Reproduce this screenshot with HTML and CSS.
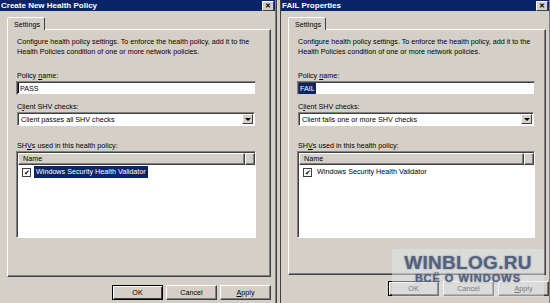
FILE: index.html
```html
<!DOCTYPE html>
<html lang="en">
<head>
    <meta charset="UTF-8">
    <title>Health Policy Dialogs</title>
    <link rel="stylesheet" href="styles.css">
</head>
<body>
<div class="desktop">
    <div class="window win-left">
        <div class="titlebar">
            <span class="title">Create New Health Policy</span>
            <span class="close">&#x2715;</span>
        </div>
        <div class="tabs"><div class="tab">Settings</div></div>
        <div class="panel">
            <p class="desc">Configure health policy settings. To enforce the health policy, add it to the<br>Health Policies condition of one or more network policies.</p>
            <div class="label lbl-name">Policy <u>n</u>ame:</div>
            <div class="textbox"><span class="caret"></span>PASS</div>
            <div class="label lbl-checks">C<u>l</u>ient SHV checks:</div>
            <div class="select">
                <span class="select-text">Client passes all SHV checks</span>
                <span class="drop"><span class="arrow"></span></span>
            </div>
            <div class="label lbl-shv">SH<u>V</u>s used in this health policy:</div>
            <div class="list">
                <div class="list-head">
                    <span class="col-name">Name</span>
                    <span class="col-rest"></span>
                </div>
                <div class="list-row">
                    <span class="check">&#x2714;</span>
                    <span class="item selected">Windows Security Health Validator</span>
                </div>
            </div>
        </div>
        <div class="buttons">
            <div class="btn default">OK</div>
            <div class="btn">Cancel</div>
            <div class="btn"><u>A</u>pply</div>
        </div>
    </div>

    <div class="window win-right">
        <div class="titlebar">
            <span class="title">FAIL Properties</span>
            <span class="close">&#x2715;</span>
        </div>
        <div class="tabs"><div class="tab">Settings</div></div>
        <div class="panel">
            <p class="desc">Configure health policy settings. To enforce the health policy, add it to the<br>Health Policies condition of one or more network policies.</p>
            <div class="label lbl-name">Policy <u>n</u>ame:</div>
            <div class="textbox"><span class="selected">FAIL</span></div>
            <div class="label lbl-checks">C<u>l</u>ient SHV checks:</div>
            <div class="select">
                <span class="select-text">Client fails one or more SHV checks</span>
                <span class="drop"><span class="arrow"></span></span>
            </div>
            <div class="label lbl-shv">SH<u>V</u>s used in this health policy:</div>
            <div class="list">
                <div class="list-head">
                    <span class="col-name">Name</span>
                    <span class="col-rest"></span>
                </div>
                <div class="list-row">
                    <span class="check">&#x2714;</span>
                    <span class="item">Windows Security Health Validator</span>
                </div>
            </div>
        </div>
        <div class="buttons">
            <div class="btn default">OK</div>
            <div class="btn">Cancel</div>
            <div class="btn"><u>A</u>pply</div>
        </div>
    </div>

    <div class="watermark">
        <div class="wm-big">WINBLOG.RU</div>
        <div class="wm-small">ВСЁ О WINDOWS</div>
    </div>
</div>
</body>
</html>
```

FILE: styles.css
```css
* {
    box-sizing: border-box;
}
body {
    margin: 0;
    width: 550px;
    height: 303px;
    overflow: hidden;
    background: #d4d0c8;
    font-family: "Liberation Sans", Arial, sans-serif;
    font-size: 7.2px;
    color: #000;
}
.desktop {
    display: flex;
    gap: 3px;
    height: 303px;
    position: relative;
}
.window {
    background: #d4d0c8;
    display: flex;
    flex-direction: column;
    flex-shrink: 0;
}
.win-left {
    width: 277px;
    border-right: 1px solid #404040;
    box-shadow: inset -1px 0 0 #808080;
}
.win-right {
    width: 270px;
    border-left: 1px solid #404040;
    border-right: 1px solid #808080;
}
.titlebar {
    height: 11px;
    background: #0a246a;
    display: flex;
    align-items: center;
    justify-content: space-between;
    padding-left: 1px;
}
.win-left .titlebar {
    margin-right: 1px;
}
.title {
    color: #fff;
    font-weight: bold;
    font-size: 8px;
    line-height: 11px;
}
.close {
    width: 12px;
    height: 10px;
    margin-right: 1px;
    background: #d4d0c8;
    border-top: 1px solid #fff;
    border-left: 1px solid #fff;
    border-right: 1px solid #404040;
    border-bottom: 1px solid #404040;
    font-size: 7px;
    font-weight: bold;
    line-height: 8px;
    text-align: center;
}
.tabs {
    display: flex;
    margin: 6px 0 0 7px;
}
.tab {
    width: 38px;
    height: 13px;
    padding: 2px 0 0 6px;
    border-top: 1px solid #fff;
    border-left: 1px solid #fff;
    border-right: 1px solid #404040;
    border-radius: 2px 2px 0 0;
    line-height: 10px;
    position: relative;
    z-index: 1;
    margin-bottom: -1px;
    background: #d4d0c8;
}
.panel {
    margin-left: 7px;
    border-top: 1px solid #fff;
    border-left: 1px solid #fff;
    border-right: 1px solid #404040;
    border-bottom: 1px solid #404040;
    box-shadow: inset -1px -1px 0 #808080;
    display: flex;
    flex-direction: column;
}
.win-left .panel {
    width: 264px;
    height: 248px;
    padding: 7px 14px 0 8px;
}
.win-right .panel {
    width: 258px;
    height: 246px;
    padding: 7px 10px 0 8px;
}
.desc {
    margin: 0 0 0 1px;
    line-height: 10px;
}
.label {
    line-height: 10px;
    padding-left: 1px;
}
.lbl-name {
    margin-top: 14px;
}
.lbl-checks {
    margin-top: 7px;
}
.lbl-shv {
    margin-top: 15px;
}
.textbox {
    height: 14px;
    background: #fff;
    border-top: 1px solid #808080;
    border-left: 1px solid #808080;
    border-right: 1px solid #d4d0c8;
    border-bottom: 1px solid #d4d0c8;
    box-shadow: inset 1px 1px 0 #404040;
    padding: 1px 0 0 1px;
    line-height: 11px;
    display: flex;
}
.caret {
    width: 1px;
    height: 10px;
    background: #000;
    margin: 0 1px 0 0;
}
.selected {
    background: #0a246a;
    color: #fff;
}
.textbox .selected {
    padding: 0 1px;
}
.select {
    height: 14px;
    margin: 0 1px;
    background: #fff;
    border-top: 1px solid #808080;
    border-left: 1px solid #808080;
    border-right: 1px solid #fff;
    border-bottom: 1px solid #fff;
    box-shadow: inset 1px 1px 0 #404040;
    display: flex;
    align-items: stretch;
    padding: 1px 1px 1px 3px;
}
.select-text {
    flex: 1;
    line-height: 11px;
}
.drop {
    width: 11px;
    background: #d4d0c8;
    border-top: 1px solid #fff;
    border-left: 1px solid #fff;
    border-right: 1px solid #404040;
    border-bottom: 1px solid #404040;
    display: flex;
    align-items: center;
    justify-content: center;
}
.arrow {
    width: 0;
    height: 0;
    border-left: 3px solid transparent;
    border-right: 3px solid transparent;
    border-top: 3px solid #000;
}
.list {
    height: 87px;
    background: #fff;
    border-top: 1px solid #808080;
    border-left: 1px solid #808080;
    border-right: 1px solid #fff;
    border-bottom: 1px solid #fff;
    box-shadow: inset 1px 1px 0 #404040;
    padding: 1px 0 0 1px;
}
.list-head {
    height: 12px;
    display: flex;
}
.col-name,
.col-rest {
    background: #d4d0c8;
    border-top: 1px solid #fff;
    border-left: 1px solid #fff;
    border-right: 1px solid #404040;
    border-bottom: 1px solid #404040;
    box-shadow: inset -1px -1px 0 #808080;
    line-height: 9px;
    padding-left: 4px;
}
.col-name {
    flex: 1;
}
.col-rest {
    width: 10px;
}
.list-row {
    display: flex;
    align-items: center;
    height: 12px;
    padding-left: 4px;
    margin-top: 1px;
}
.check {
    width: 9px;
    height: 9px;
    border: 1px solid #404040;
    background: #fff;
    font-size: 7px;
    line-height: 7px;
    text-align: center;
    margin-right: 3px;
}
.item {
    padding: 1px 2px;
    line-height: 10px;
}
.buttons {
    display: flex;
    justify-content: flex-end;
}
.win-left .buttons {
    margin-top: 8px;
    gap: 3px;
    padding-right: 5px;
}
.win-right .buttons {
    margin-top: 6px;
    gap: 4px;
    padding-right: 0;
}
.btn {
    width: 51px;
    height: 15px;
    border-top: 1px solid #fff;
    border-left: 1px solid #fff;
    border-right: 1px solid #404040;
    border-bottom: 1px solid #404040;
    box-shadow: inset -1px -1px 0 #808080;
    text-align: center;
    line-height: 13px;
}
.btn.default {
    border: 1px solid #000;
    box-shadow: inset 1px 1px 0 #fff, inset -1px -1px 0 #404040;
}
.watermark {
    position: absolute;
    left: 392px;
    top: 249px;
    width: 152px;
    height: 48px;
    background: rgba(226, 229, 233, 0.5);
    text-align: center;
    font-weight: bold;
    color: #52617e;
    text-shadow: 0 0 2px rgba(60, 70, 100, 0.55);
}
.wm-big {
    font-size: 19px;
    line-height: 20px;
    margin-top: 4px;
    letter-spacing: 0.3px;
}
.wm-small {
    font-size: 11px;
    line-height: 11px;
    letter-spacing: 1px;
}
```
